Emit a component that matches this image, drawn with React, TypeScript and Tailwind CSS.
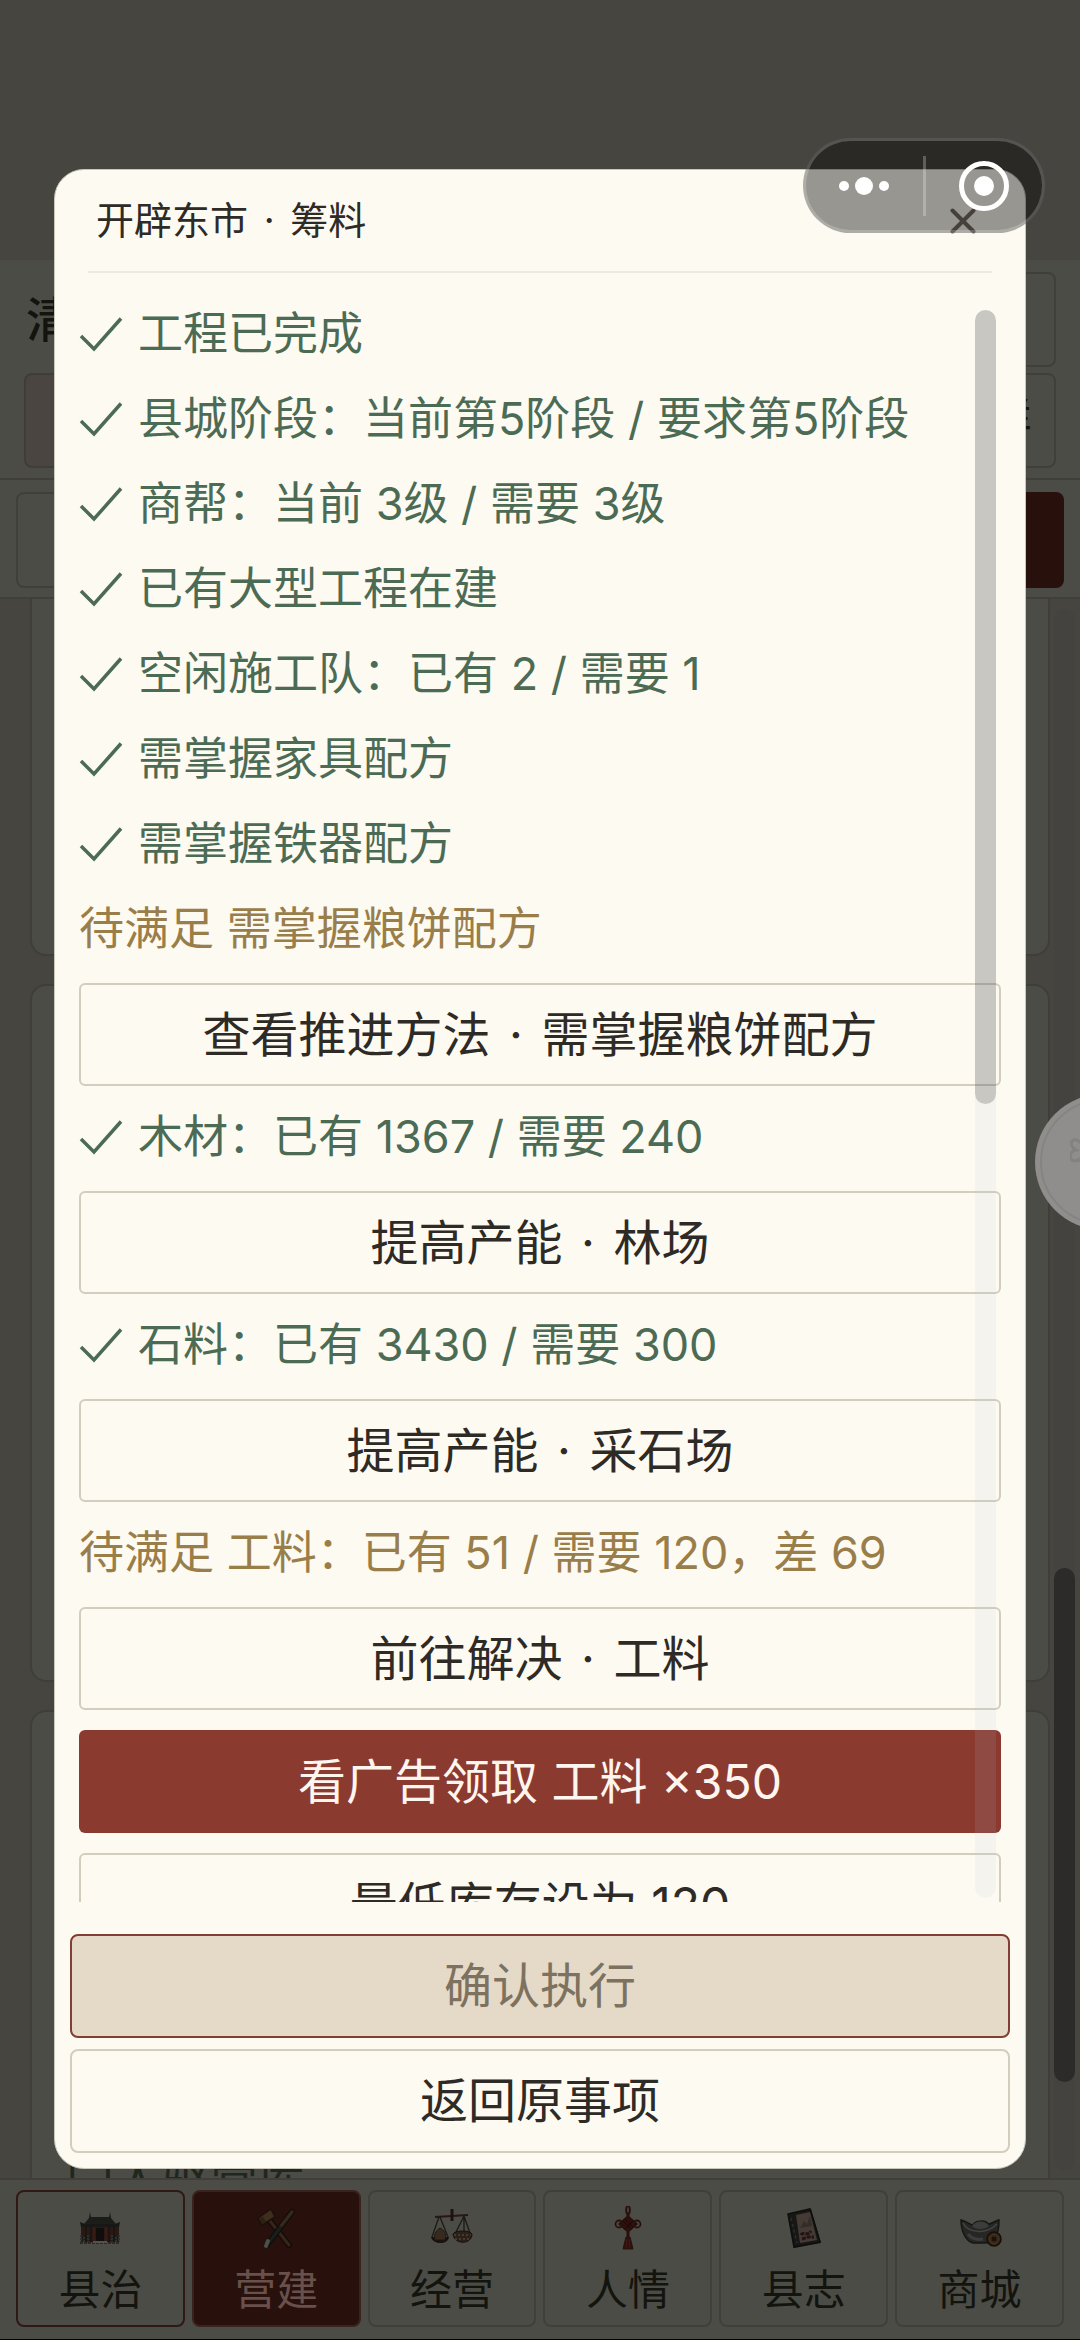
import React from "react";

type Item =
  | { kind: "done"; text: string }
  | { kind: "todo"; text: string }
  | { kind: "button"; text: string }
  | { kind: "ad"; text: string };

const items: Item[] = [
  { kind: "done", text: "工程已完成" },
  { kind: "done", text: "县城阶段：当前第5阶段 / 要求第5阶段" },
  { kind: "done", text: "商帮：当前 3级 / 需要 3级" },
  { kind: "done", text: "已有大型工程在建" },
  { kind: "done", text: "空闲施工队：已有 2 / 需要 1" },
  { kind: "done", text: "需掌握家具配方" },
  { kind: "done", text: "需掌握铁器配方" },
  { kind: "todo", text: "待满足 需掌握粮饼配方" },
  { kind: "button", text: "查看推进方法 · 需掌握粮饼配方" },
  { kind: "done", text: "木材：已有 1367 / 需要 240" },
  { kind: "button", text: "提高产能 · 林场" },
  { kind: "done", text: "石料：已有 3430 / 需要 300" },
  { kind: "button", text: "提高产能 · 采石场" },
  { kind: "todo", text: "待满足 工料：已有 51 / 需要 120，差 69" },
  { kind: "button", text: "前往解决 · 工料" },
  { kind: "ad", text: "看广告领取 工料 ×350" },
  { kind: "button", text: "最低库存设为 120" },
];

/* Gives the middle dot between two phrases a little more room. */
function Dotted({ text }: { text: string }) {
  const [head, tail] = text.split("·");
  if (tail === undefined) return <>{text}</>;
  return (
    <>
      {head}
      <span className="px-[5px]">·</span>
      {tail}
    </>
  );
}

function Check() {
  return (
    <svg aria-hidden="true" className="h-[36px] w-[44px] shrink-0" viewBox="0 0 44 36" fill="none" stroke="currentColor" strokeWidth="3.5">
      <path d="M2 20 L15 33 L42 2.5" />
    </svg>
  );
}

function ListItem({ item }: { item: Item }) {
  if (item.kind === "done") {
    return (
      <li className="flex items-center gap-[15px] pb-[3px] text-[45px] leading-[62px] whitespace-nowrap text-[#4c6b55]">
        <Check />
        <span>{item.text}</span>
      </li>
    );
  }
  if (item.kind === "todo") {
    return <li className="pb-[3px] text-[45px] leading-[62px] whitespace-nowrap text-[#9a7e4a]">{item.text}</li>;
  }
  if (item.kind === "ad") {
    return (
      <li className="flex">
        <button className="h-[103px] flex-1 rounded-md bg-[#8b3a30] text-[48px] text-[#fdf5ee]">{item.text}</button>
      </li>
    );
  }
  return (
    <li className="flex">
      <button className="h-[103px] flex-1 rounded-md border-2 border-[#d3cdbf] text-[48px] text-[#2e2a26]">
        <Dotted text={item.text} />
      </button>
    </li>
  );
}

function HallIcon() {
  return (
    <svg aria-hidden="true" className="size-11" viewBox="0 0 44 44">
      <path d="M12 6 L13 11 H31 L32 6 L33 12 L38 18 L34 19 H10 L6 18 L11 12 Z" fill="#1b1d1b" />
      <path d="M2 16 L7 18 H37 L42 16 L41 21 H3 Z" fill="#171816" />
      <path d="M3 21 H41 V36 H3 Z" fill="#2a1913" />
      <path d="M8 21 V36 M13 21 V36 M31 21 V36 M36 21 V36" stroke="#191512" strokeWidth="2" />
      <path d="M18 22 H26 V35 H18 Z" fill="#100d0c" />
      <path d="M16 21 V35 M28 21 V35" stroke="#3c1a14" strokeWidth="2" />
      <path d="M3 29 V36 M6 31 V37 M10 29 V37 M34 29 V37 M38 31 V37 M41 29 V36" stroke="#2a332e" strokeWidth="2" strokeDasharray="2 1" />
      <path d="M2 37 H42" stroke="#2a2b28" strokeWidth="2" strokeDasharray="3 1" />
      <path d="M15 36 H29" stroke="#55524a" strokeWidth="2" />
    </svg>
  );
}

function ToolsIcon() {
  return (
    <svg aria-hidden="true" className="size-11" viewBox="0 0 44 44" strokeLinecap="round">
      <path d="M16 15 L35 39" stroke="#150b08" strokeWidth="6" />
      <path d="M16 15 L35 39" stroke="#35261a" strokeWidth="3" />
      <path d="M38 6 L13 39" stroke="#120d0a" strokeWidth="6" />
      <path d="M38 6 L27 20" stroke="#35291c" strokeWidth="3.5" />
      <path d="M26 22 L16 35" stroke="#191d1b" strokeWidth="3.5" />
      <path d="M14 35 L12 40" stroke="#4c4f4c" strokeWidth="4" />
      <path d="M4 12 L17 3 L21 11 L8 19 Z" fill="#3f2e1e" stroke="#1b100a" strokeWidth="1.5" />
      <path d="M5 13 L9 18 L12 15 L8 10 Z" fill="#2d2015" />
    </svg>
  );
}

function ScalesIcon() {
  return (
    <svg aria-hidden="true" className="size-11" viewBox="0 0 44 44" fill="none">
      <path d="M5 11 L38 9" stroke="#2b1611" strokeWidth="2.2" />
      <path d="M22 3 V15" stroke="#1e1310" strokeWidth="3" />
      <path d="M9 11 L2 31 M10 11 L18 31 M34 10 L24 30 M34 10 L41 30 M34 10 V26" stroke="#1b1a16" strokeWidth="1.3" />
      <path d="M1 31 H19 C18 39 3 39 1 31 Z" fill="#17120e" />
      <path d="M10 22 C14 24 17 28 15 34 H5 C3 28 7 24 10 22 Z" fill="#382a1f" stroke="#1f1711" />
      <path d="M23 28 C25 24 40 24 42 28 C42 39 24 39 23 28 Z" fill="#2b2118" stroke="#16110d" />
      <path d="M24 29 H41 M25 33 H40" stroke="#524434" strokeWidth="1.5" strokeDasharray="2 2" />
    </svg>
  );
}

function KnotIcon() {
  return (
    <svg aria-hidden="true" className="size-11" viewBox="0 0 44 44" fill="none" stroke="#2a100d">
      <ellipse cx="22" cy="4" rx="1.8" ry="4" strokeWidth="2" />
      <path d="M22 8 V12" strokeWidth="3" />
      <circle cx="13" cy="18" r="3.5" strokeWidth="1.8" />
      <circle cx="31" cy="18" r="3.5" strokeWidth="1.8" />
      <path d="M22 10 L31 18 L22 26 L13 18 Z" fill="#2e100d" strokeWidth="1.5" />
      <path d="M17 15 L25 23 M19 13 L27 21 M27 15 L19 23" stroke="#1c0807" strokeWidth="1" />
      <path d="M22 26 V31" strokeWidth="3" />
      <path d="M20 31 H24 L27 43 H17 Z" fill="#2e100c" strokeWidth="1" />
      <path d="M21 33 L20 42 M23 33 L24 42" stroke="#421a15" strokeWidth="1" />
    </svg>
  );
}

function BookIcon() {
  return (
    <svg aria-hidden="true" className="size-11" viewBox="0 0 44 44">
      <path d="M6 8 L29 3 L39 37 L12 42 Z" fill="#171816" />
      <path d="M6 8 L28 3 L38 36 L12 41 Z" fill="none" stroke="#0d0e0d" strokeWidth="1.5" />
      <path d="M14 9 L28 6 L35 34 L18 37 Z" fill="#443b34" />
      <path d="M18 22 L22 15 L25 18 L28 10 L30 20 Z" fill="#342d27" />
      <path d="M19 29 C21 25 25 31 29 25 M20 33 L26 31 L32 31" stroke="#241411" strokeWidth="3" fill="none" strokeDasharray="4 1" />
      <path d="M9 12 L15 37" stroke="#2e2f2a" strokeWidth="1.5" strokeDasharray="3 3" />
    </svg>
  );
}

function IngotIcon() {
  return (
    <svg aria-hidden="true" className="size-11" viewBox="0 0 44 44">
      <path d="M3 14 C8 15 11 18 15 19 C17 14 28 14 30 18 C34 18 36 15 41 14 C41 25 38 37 26 37 H15 C7 35 3 24 3 14 Z" fill="#262724" stroke="#151614" strokeWidth="1.5" />
      <path d="M14 20 C17 14 28 14 31 20 C26 24 18 24 14 20 Z" fill="#3c3d3a" />
      <path d="M5 17 C10 27 28 29 39 18" stroke="#444541" strokeWidth="1.5" fill="none" />
      <path d="M10 28 C14 33 20 34 25 33" stroke="#3c3d3a" strokeWidth="3" fill="none" />
      <circle cx="36" cy="33" r="7" fill="#332415" stroke="#160f09" strokeWidth="1.5" />
      <circle cx="36" cy="33" r="4.5" fill="none" stroke="#493722" strokeWidth="1" />
      <path d="M34 31 H38 V35 H34 Z" fill="#18120c" />
    </svg>
  );
}

const tabs = [
  { label: "县治", icon: <HallIcon />, style: "border-[#301815] text-[#14140f]" },
  { label: "营建", icon: <ToolsIcon />, style: "border-[#3a231e] bg-[#28110d] text-[#69504a]" },
  { label: "经营", icon: <ScalesIcon />, style: "border-[#413f3b] text-[#14140f]" },
  { label: "人情", icon: <KnotIcon />, style: "border-[#413f3b] text-[#14140f]" },
  { label: "县志", icon: <BookIcon />, style: "border-[#413f3b] text-[#14140f]" },
  { label: "商城", icon: <IngotIcon />, style: "border-[#413f3b] text-[#14140f]" },
];

function Page() {
  return (
    <div className="flex min-h-0 flex-1 flex-col">
      <header className="flex flex-col bg-[#4b4c46] text-[45px] text-[#14140f]">
        <div className="h-[260px] bg-[#474540]" />
        <div className="flex flex-col gap-[6px] border-b-2 border-[#403f3a] px-6 pt-3 pb-[10px]">
          <div className="flex h-[95px] items-center justify-between">
            <h1 className="pl-[2px] text-[48px] font-medium">清</h1>
            <button aria-label="设置" className="h-full w-[160px] rounded-lg border-2 border-[#403f3a]" />
          </div>
          <div className="flex h-[95px] justify-between">
            <button aria-label="公告" className="w-[300px] rounded-lg border-2 border-[#403d39] bg-[#4a4540]" />
            <button className="w-[160px] rounded-lg border-2 border-[#403f3a] pr-[22px] text-right text-[45px]">详</button>
          </div>
        </div>
        <div className="flex justify-between border-b-2 border-[#403f3a] px-4 pt-3 pb-[9px]">
          <button aria-label="工程" className="h-[96px] w-[300px] rounded-lg border-2 border-[#403f3a]" />
          <button aria-label="大型工程" className="h-[96px] w-[300px] rounded-lg bg-[#28110d]" />
        </div>
      </header>
      <main className="relative flex min-h-0 flex-1 flex-col gap-7 overflow-hidden bg-[#474540] px-[30px]">
        <section className="h-[357px] shrink-0 rounded-b-2xl border-2 border-t-0 border-[#3f3e39] bg-[#4b4c46]" />
        <section className="h-[698px] shrink-0 rounded-2xl border-2 border-[#3f3e39] bg-[#4b4c46]" />
        <section className="flex h-[600px] shrink-0 items-end rounded-2xl border-2 border-[#3f3e39] bg-[#4b4c46] px-[34px] pb-[100px]">
          <p className="text-[48px] leading-[60px] text-[#20271e]">门人驱营库</p>
        </section>
        <div className="absolute top-[10px] right-[5px] bottom-[8px] flex w-[21px] flex-col justify-end rounded-full bg-[#454340] pb-[88px]">
          <div className="h-[514px] rounded-full bg-[#2c2b29]" />
        </div>
      </main>
      <nav className="grid grid-cols-6 gap-[7px] border-t-2 border-b border-t-[#3f3e39] border-b-black bg-[#4b4c46] px-4 pt-[10px] pb-[12px]">
        {tabs.map((t) => (
          <button key={t.label} className={`flex h-[137px] flex-col items-center rounded-lg border-2 pt-[14px] ${t.style}`}>
            {t.icon}
            <span className="pt-[10px] text-[42px] leading-[60px]">{t.label}</span>
          </button>
        ))}
      </nav>
    </div>
  );
}

function Dialog() {
  return (
    <div className="absolute inset-0 flex flex-col px-[54px] pt-[169px] pb-[171px]">
      <div role="dialog" aria-labelledby="dialog-title" className="flex min-h-0 flex-1 flex-col rounded-[30px] border border-[#c9c6bc] bg-[#fdfaf1]">
        <header className="mx-[33px] flex h-[103px] shrink-0 items-center justify-between border-b-2 border-[#ecebe3] pr-[16px] pl-2">
          <h2 id="dialog-title" className="text-[38px] text-[#2e2a26]">
            <Dotted text="开辟东市 · 筹料" />
          </h2>
          <button aria-label="关闭" className="text-[#736b60]">
            <svg aria-hidden="true" className="size-[26px]" viewBox="0 0 26 26" stroke="currentColor" strokeWidth="4" strokeLinecap="round">
              <path d="M2.5 2.5 L23.5 23.5 M23.5 2.5 L2.5 23.5" />
            </svg>
          </button>
        </header>
        <div className="relative mt-[30px] flex min-h-0 flex-1 flex-col px-6">
          <ul className="flex min-h-0 flex-1 flex-col gap-5 overflow-y-auto [scrollbar-width:none] *:shrink-0">
            {items.map((item) => (
              <ListItem key={item.text} item={item} />
            ))}
          </ul>
          <div className="pointer-events-none absolute top-[7px] right-[29px] bottom-1 w-[21px] rounded-full bg-[#b4c8d2]/12">
            <div className="h-1/2 rounded-full bg-black/18" />
          </div>
        </div>
        <footer className="flex shrink-0 flex-col gap-[11px] px-[15px] pt-8 pb-[15px] text-[48px]">
          <button disabled className="h-[104px] rounded-lg border-2 border-[#833d33] bg-[#e5dac8] text-[#7d715f]">确认执行</button>
          <button className="h-[104px] rounded-lg border-2 border-[#d3cdbf] text-[#2e2a26]">返回原事项</button>
        </footer>
      </div>
    </div>
  );
}

function Capsule() {
  return (
    <div className="absolute top-[138px] right-[35px] flex h-[95px] w-[242px] items-center rounded-full border-3 border-white/20 bg-black/40 text-white">
      <button aria-label="更多" className="flex flex-1 items-center justify-center gap-[6px]">
        <span className="size-[10px] rounded-full bg-white" />
        <span className="size-[18px] rounded-full bg-white" />
        <span className="size-[10px] rounded-full bg-white" />
      </button>
      <span className="h-[60px] w-[3px] bg-white/25" />
      <button aria-label="退出" className="flex flex-1 items-center justify-center">
        <span className="flex size-[50px] items-center justify-center rounded-full border-5 border-white">
          <span className="size-[20px] rounded-full bg-white" />
        </span>
      </button>
    </div>
  );
}

function FloatingBall() {
  return (
    <button aria-label="悬浮球" className="absolute top-[1094px] -right-[91px] flex size-[136px] items-center rounded-full bg-[#8f8e8c] p-[5px]">
      <span className="flex size-full items-center rounded-full border-2 border-[#858482] pl-[28px]">
        <svg aria-hidden="true" className="size-[60px]" viewBox="0 0 60 60" fill="none" stroke="#838280" strokeWidth="3">
          <path d="M12 12 C4 2 -4 12 6 18 C-4 20 0 34 10 27 C12 36 22 32 18 24 M12 12 C16 4 24 8 20 16" />
        </svg>
      </span>
    </button>
  );
}

export default function App() {
  return (
    <div className="relative flex h-screen flex-col overflow-hidden bg-[#474540] font-[Inter,'Noto_Sans_CJK_SC',sans-serif]">
      <Page />
      <Dialog />
      <FloatingBall />
      <Capsule />
    </div>
  );
}
